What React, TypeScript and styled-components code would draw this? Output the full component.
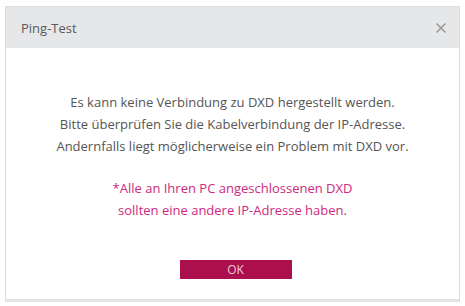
import React from "react";
import styled, { createGlobalStyle } from "styled-components";

const Global = createGlobalStyle`
  html, body { margin: 0; padding: 0; background: #ffffff; }
  body { font-family: "Open Sans", "Noto Sans", sans-serif; }
`;

const Page = styled.div`
  width: 465px;
  height: 306px;
  padding: 6px 5px 4px 5px;
  box-sizing: border-box;
  background: #fff;
`;

const Dialog = styled.div`
  height: 100%;
  box-sizing: border-box;
  border: 1px solid #dcdcdc;
  border-bottom: 3px solid #e4e4e4;
  display: flex;
  flex-direction: column;
  background: #fff;
`;

const Header = styled.div`
  height: 41px;
  background: #e6e7e9;
  display: flex;
  align-items: center;
  justify-content: space-between;
  padding: 0 12px 0 15px;
  flex-shrink: 0;
`;

const Title = styled.div`
  font-size: 13px;
  color: #5a5a5a;
`;

const Close = styled.div`
  width: 12px;
  height: 12px;
  display: flex;
`;

const Body = styled.div`
  flex: 1;
  display: flex;
  flex-direction: column;
  align-items: center;
  padding-top: 43px;
`;

const Message = styled.p<{ $accent?: boolean }>`
  margin: 0;
  font-size: 13px;
  line-height: 22px;
  color: ${(p) => (p.$accent ? "#cc2a80" : "#555")};
  text-align: center;
`;

const Spacer = styled.div<{ $h: number }>`
  height: ${(p) => p.$h}px;
`;

const Button = styled.button`
  width: 112px;
  height: 19px;
  margin-left: 6px;
  border: none;
  background: #ab104c;
  color: #f2c8da;
  font-family: "Open Sans", sans-serif;
  font-size: 12px;
  padding: 0;
  line-height: 19px;
`;

export default function App() {
  return (
    <>
      <Global />
      <Page>
        <Dialog>
          <Header>
            <Title>Ping-Test</Title>
            <Close>
              <svg width="12" height="12" viewBox="0 0 12 12">
                <path d="M1.5 1.5 L10.5 10.5 M10.5 1.5 L1.5 10.5" stroke="#9a9a9a" strokeWidth="1.6" />
              </svg>
            </Close>
          </Header>
          <Body>
            <Message>
              Es kann keine Verbindung zu DXD hergestellt werden.
              <br />
              Bitte überprüfen Sie die Kabelverbindung der IP-Adresse.
              <br />
              Andernfalls liegt möglicherweise ein Problem mit DXD vor.
            </Message>
            <Spacer $h={20} />
            <Message $accent>
              *Alle an Ihren PC angeschlossenen DXD
              <br />
              sollten eine andere IP-Adresse haben.
            </Message>
            <Spacer $h={39} />
            <Button>OK</Button>
          </Body>
        </Dialog>
      </Page>
    </>
  );
}
